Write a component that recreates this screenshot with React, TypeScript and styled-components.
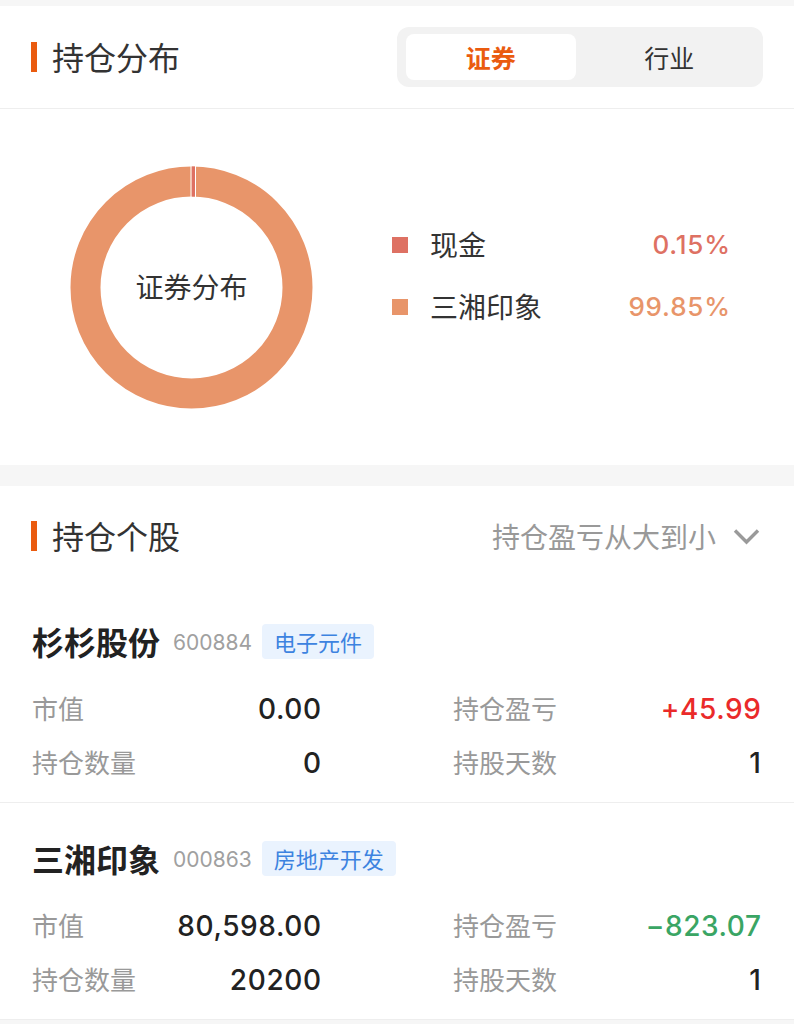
import React from "react";
import styled, { createGlobalStyle } from "styled-components";

const GlobalStyle = createGlobalStyle`
  body {
    margin: 0;
    background: #f6f6f6;
    font-family: Inter, "Noto Sans CJK SC", sans-serif;
    color: #333;
  }
`;

type Slice = { name: string; value: string; color: string };
type Stat = { label: string; value: string; tone?: "up" | "down" };
type Stock = { name: string; code: string; tag: string; stats: Stat[] };

const slices: Slice[] = [
  { name: "现金", value: "0.15%", color: "#de7163" },
  { name: "三湘印象", value: "99.85%", color: "#e8956a" },
];

const stocks: Stock[] = [
  {
    name: "杉杉股份",
    code: "600884",
    tag: "电子元件",
    stats: [
      { label: "市值", value: "0.00" },
      { label: "持仓盈亏", value: "+45.99", tone: "up" },
      { label: "持仓数量", value: "0" },
      { label: "持股天数", value: "1" },
    ],
  },
  {
    name: "三湘印象",
    code: "000863",
    tag: "房地产开发",
    stats: [
      { label: "市值", value: "80,598.00" },
      { label: "持仓盈亏", value: "−823.07", tone: "down" },
      { label: "持仓数量", value: "20200" },
      { label: "持股天数", value: "1" },
    ],
  },
];

const Donut = () => {
  // 半径 106, 线宽 30 -> 外圈 121, 内圈 91
  const c = 121.5;
  const r = 106;
  const len = 2 * Math.PI * r;
  return (
    <svg width="243" height="243" viewBox="0 0 243 243">
      <circle cx={c} cy={c} r={r} fill="none" stroke="#e8956a" strokeWidth="30" />
      <circle
        cx={c}
        cy={c}
        r={r}
        fill="none"
        stroke="#de7163"
        strokeWidth="30"
        strokeDasharray={`4 ${len}`}
        transform={`rotate(-90 ${c} ${c})`}
      />
      <line x1={c - 0.5} y1="0" x2={c - 0.5} y2="32" stroke="#fff" strokeWidth="1" />
      <line x1={c + 4} y1="0" x2={c + 4} y2="32" stroke="#fff" strokeWidth="1" />
    </svg>
  );
};

const Chevron = () => (
  <svg width="27" height="17" viewBox="0 0 27 17">
    <path d="M2 2.5 L13.5 14 L25 2.5" fill="none" stroke="#9a9a9a" strokeWidth="3.4" />
  </svg>
);

const App = () => {
  return (
    <>
      <GlobalStyle />
      <Page>
        <Panel>
          <Header $bordered>
            <Title>持仓分布</Title>
            <Segment>
              <Tab $active>证券</Tab>
              <Tab>行业</Tab>
            </Segment>
          </Header>
          <ChartArea>
            <DonutBox>
              <Donut />
              <DonutLabel>证券分布</DonutLabel>
            </DonutBox>
            <Legend>
              {slices.map((s) => (
                <LegendRow key={s.name}>
                  <Swatch $color={s.color} />
                  <LegendName>{s.name}</LegendName>
                  <LegendValue $color={s.color}>{s.value}</LegendValue>
                </LegendRow>
              ))}
            </Legend>
          </ChartArea>
        </Panel>

        <Panel $gap>
          <Header>
            <Title>持仓个股</Title>
            <Sort>
              持仓盈亏从大到小
              <Chevron />
            </Sort>
          </Header>
          {stocks.map((st) => (
            <Card key={st.code}>
              <NameRow>
                <Name>{st.name}</Name>
                <Code>{st.code}</Code>
                <Tag>{st.tag}</Tag>
              </NameRow>
              <Stats>
                {st.stats.map((s) => (
                  <StatCell key={s.label}>
                    <StatLabel>{s.label}</StatLabel>
                    <StatValue $tone={s.tone}>{s.value}</StatValue>
                  </StatCell>
                ))}
              </Stats>
            </Card>
          ))}
        </Panel>
      </Page>
    </>
  );
};

export default App;

const Page = styled.div`
  padding-top: 6px;
  min-height: 1024px;
  box-sizing: border-box;
`;

const Panel = styled.section<{ $gap?: boolean }>`
  background: #fff;
  margin-top: ${({ $gap }) => ($gap ? "21px" : "0")};
`;

const Header = styled.div<{ $bordered?: boolean }>`
  height: ${({ $bordered }) => ($bordered ? "102px" : "100px")};
  display: flex;
  align-items: center;
  justify-content: space-between;
  padding: 0 31px;
  border-bottom: ${({ $bordered }) => ($bordered ? "1px solid #eeeeee" : "none")};
`;

const Title = styled.h2`
  margin: 0 0 3px;
  display: flex;
  align-items: center;
  gap: 15px;
  font-family: "Noto Sans CJK SC", sans-serif;
  font-size: 32px;
  font-weight: 400;
  color: #333;
  line-height: 1;

  &::before {
    content: "";
    width: 6px;
    height: 30px;
    margin-top: 3px;
    background: #ea5b0f;
  }
`;

const Segment = styled.div`
  width: 366px;
  height: 60px;
  box-sizing: border-box;
  padding: 7px 9px;
  background: #f2f2f2;
  border-radius: 12px;
  display: flex;
  gap: 9px;
`;

const Tab = styled.div<{ $active?: boolean }>`
  flex: 1;
  display: flex;
  align-items: center;
  justify-content: center;
  border-radius: 8px;
  font-family: "Noto Sans CJK SC", sans-serif;
  font-size: 25px;
  font-weight: ${({ $active }) => ($active ? 700 : 400)};
  color: ${({ $active }) => ($active ? "#ea5b0f" : "#333")};
  background: ${({ $active }) => ($active ? "#fff" : "transparent")};
`;

const ChartArea = styled.div`
  height: 356px;
  display: flex;
  align-items: center;
  padding-left: 70px;
`;

const DonutBox = styled.div`
  display: grid;
  place-items: center;

  & > * {
    grid-area: 1 / 1;
  }
`;

const DonutLabel = styled.div`
  font-family: "Noto Sans CJK SC", sans-serif;
  font-size: 28px;
  color: #333;
  margin-bottom: 3px;
`;

const Legend = styled.div`
  margin-left: 79px;
  width: 338px;
  padding-bottom: 24px;
`;

const LegendRow = styled.div`
  height: 62px;
  display: grid;
  grid-template-columns: 16px 1fr auto;
  column-gap: 22px;
  align-items: center;
`;

const Swatch = styled.span<{ $color: string }>`
  width: 16px;
  height: 16px;
  margin-top: 2px;
  background: ${({ $color }) => $color};
`;

const LegendName = styled.span`
  font-family: "Noto Sans CJK SC", sans-serif;
  font-size: 28px;
  color: #333;
`;

const LegendValue = styled.span<{ $color: string }>`
  font-size: 26px;
  font-weight: 500;
  letter-spacing: 0.8px;
  margin-right: -0.8px;
  color: ${({ $color }) => $color};
`;

const Sort = styled.div`
  display: flex;
  align-items: center;
  gap: 17px;
  font-family: "Noto Sans CJK SC", sans-serif;
  font-size: 28px;
  color: #999;
  padding-right: 3px;
`;

const Card = styled.div`
  padding: 37px 33px 12px 32px;
  border-bottom: 1px solid #eeeeee;
`;

const NameRow = styled.div`
  height: 36px;
  display: flex;
  align-items: center;
`;

const Name = styled.span`
  font-family: "Noto Sans CJK SC", sans-serif;
  font-size: 32px;
  font-weight: 700;
  color: #222;
`;

const Code = styled.span`
  margin-left: 13px;
  margin-top: 2px;
  font-size: 21px;
  color: #a0a0a0;
`;

const Tag = styled.span`
  margin-left: 10px;
  height: 35px;
  padding: 0 12px;
  display: flex;
  align-items: center;
  border-radius: 4px;
  background: #eaf3fe;
  color: #3d83e0;
  font-family: "Noto Sans CJK SC", sans-serif;
  font-size: 22px;
`;

const Stats = styled.div`
  margin-top: 23px;
  display: grid;
  grid-template-columns: 289px 308px;
  grid-auto-rows: 54px;
  column-gap: 132px;
`;

const StatCell = styled.div`
  display: flex;
  align-items: center;
  justify-content: space-between;
`;

const StatLabel = styled.span`
  font-family: "Noto Sans CJK SC", sans-serif;
  font-size: 26px;
  color: #999;
  margin-top: -3px;
`;

const StatValue = styled.span<{ $tone?: "up" | "down" }>`
  font-size: 28px;
  font-weight: 500;
  letter-spacing: 0.6px;
  margin-right: -0.6px;
  color: ${({ $tone }) =>
    $tone === "up" ? "#ea2a2a" : $tone === "down" ? "#3aa564" : "#222"};
`;
